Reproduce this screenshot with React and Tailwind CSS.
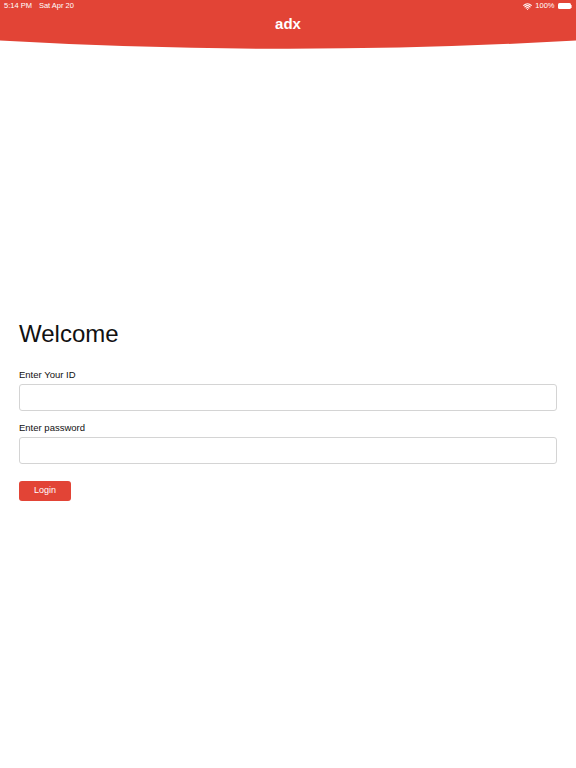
import { Wifi } from 'lucide-react'

const StatusBar = () => (
  <div className="flex items-center justify-between h-[12px] px-[4px] text-[7.5px] text-white">
    <div className="flex gap-[7px]">
      <span>5:14 PM</span>
      <span>Sat Apr 20</span>
    </div>
    <div className="flex items-center gap-[3px]">
      <Wifi size={9} strokeWidth={3} />
      <span>100%</span>
      <div className="flex items-center">
        <div className="w-[13px] h-[6px] rounded-[1.5px] bg-white" />
        <div className="w-[1px] h-[3px] bg-white/60 ml-[0.5px]" />
      </div>
    </div>
  </div>
)

const Field = ({ label, type = 'text' }) => (
  <div className="flex flex-col">
    <label className="text-[9.5px] text-[#111] leading-[12px] mb-[3px]">{label}</label>
    <input
      type={type}
      className="h-[27px] w-full rounded-[3px] border border-[#d4d4d4] bg-white px-2 outline-none"
    />
  </div>
)

export default function App() {
  return (
    <div className="min-h-[768px] bg-white font-['Liberation_Sans',Arial,sans-serif]">
      {/* Header */}
      <header className="bg-[#e24436]">
        <StatusBar />
        <div className="h-[28px] flex items-center justify-center">
          <h1 className="text-white font-bold text-[15px] leading-none -mt-[6px]">adx</h1>
        </div>
      </header>
      <svg className="block w-full h-[9px]" viewBox="0 0 576 9" preserveAspectRatio="none">
        <path d="M0 0 H576 V0.5 Q288 17 0 0.5 Z" fill="#e24436" />
      </svg>

      {/* Login form */}
      <main className="px-[19px] pt-[271px]">
        <h2 className="text-[24px] text-[#111] font-light leading-[28px]">Welcome</h2>
        <div className="mt-[21px] flex flex-col gap-[11px]">
          <Field label="Enter Your ID" />
          <Field label="Enter password" type="password" />
        </div>
        <button className="mt-[17px] h-[20px] w-[52px] rounded-[3px] bg-[#e24436] text-white text-[9px]">
          Login
        </button>
      </main>
    </div>
  )
}
